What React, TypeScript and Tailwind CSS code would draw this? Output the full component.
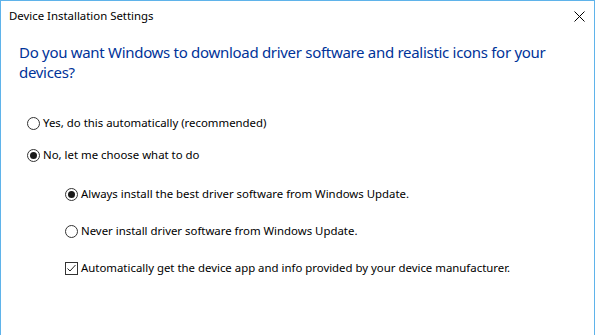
import React from 'react';

const font = { fontFamily: '"Segoe UI", "Noto Sans", "Liberation Sans", sans-serif' };

const Radio: React.FC<{ checked?: boolean }> = ({ checked }) => (
  <span className="w-[13px] h-[13px] rounded-full border border-[#333] bg-white flex items-center justify-center shrink-0">
    {checked && <span className="w-[7px] h-[7px] rounded-full bg-[#1a1a1a]" />}
  </span>
);

const Check: React.FC = () => (
  <span className="w-[13px] h-[13px] border border-[#333] bg-white flex items-center justify-center shrink-0">
    <svg width="11" height="11" viewBox="0 0 11 11">
      <path d="M1.5 5.5 L4 8 L9.5 2" fill="none" stroke="#222" strokeWidth="1" />
    </svg>
  </span>
);

const Option: React.FC<{ control: React.ReactNode; label: string; className?: string }> = ({ control, label, className }) => (
  <div className={`flex items-center gap-[3px] h-[16px] ${className ?? ''}`}>
    {control}
    <span className="text-[11.4px] text-black leading-[16px]">{label}</span>
  </div>
);

export default function App() {
  return (
    <div style={font} className="w-[595px] h-[335px] bg-white border-x border-t border-[#5fb3ea] flex flex-col overflow-hidden">
      <div className="h-[30px] flex items-center justify-between pl-[8px] pr-[9px] shrink-0">
        <span className="text-[11.4px] text-black">Device Installation Settings</span>
        <svg width="11" height="11" viewBox="0 0 11 11">
          <path d="M0.5 0.5 L10.5 10.5 M10.5 0.5 L0.5 10.5" stroke="#000" strokeWidth="1" />
        </svg>
      </div>
      <div className="pl-[18px] pr-[4px] pt-[11px]">
        <h1 className="text-[15px] tracking-[-0.3px] leading-[20px] text-[#003399] font-normal">
          Do you want Windows to download driver software and realistic icons for your devices?
        </h1>
      </div>
      <div className="pl-[26px] flex flex-col mt-[33px]">
        <Option control={<Radio />} label="Yes, do this automatically (recommended)" />
        <Option control={<Radio checked />} label="No, let me choose what to do" className="mt-[16px]" />
        <div className="pl-[38px] flex flex-col mt-[23px] gap-[21px]">
          <Option control={<Radio checked />} label="Always install the best driver software from Windows Update." />
          <Option control={<Radio />} label="Never install driver software from Windows Update." />
          <Option control={<Check />} label="Automatically get the device app and info provided by your device manufacturer." />
        </div>
      </div>
    </div>
  );
}
